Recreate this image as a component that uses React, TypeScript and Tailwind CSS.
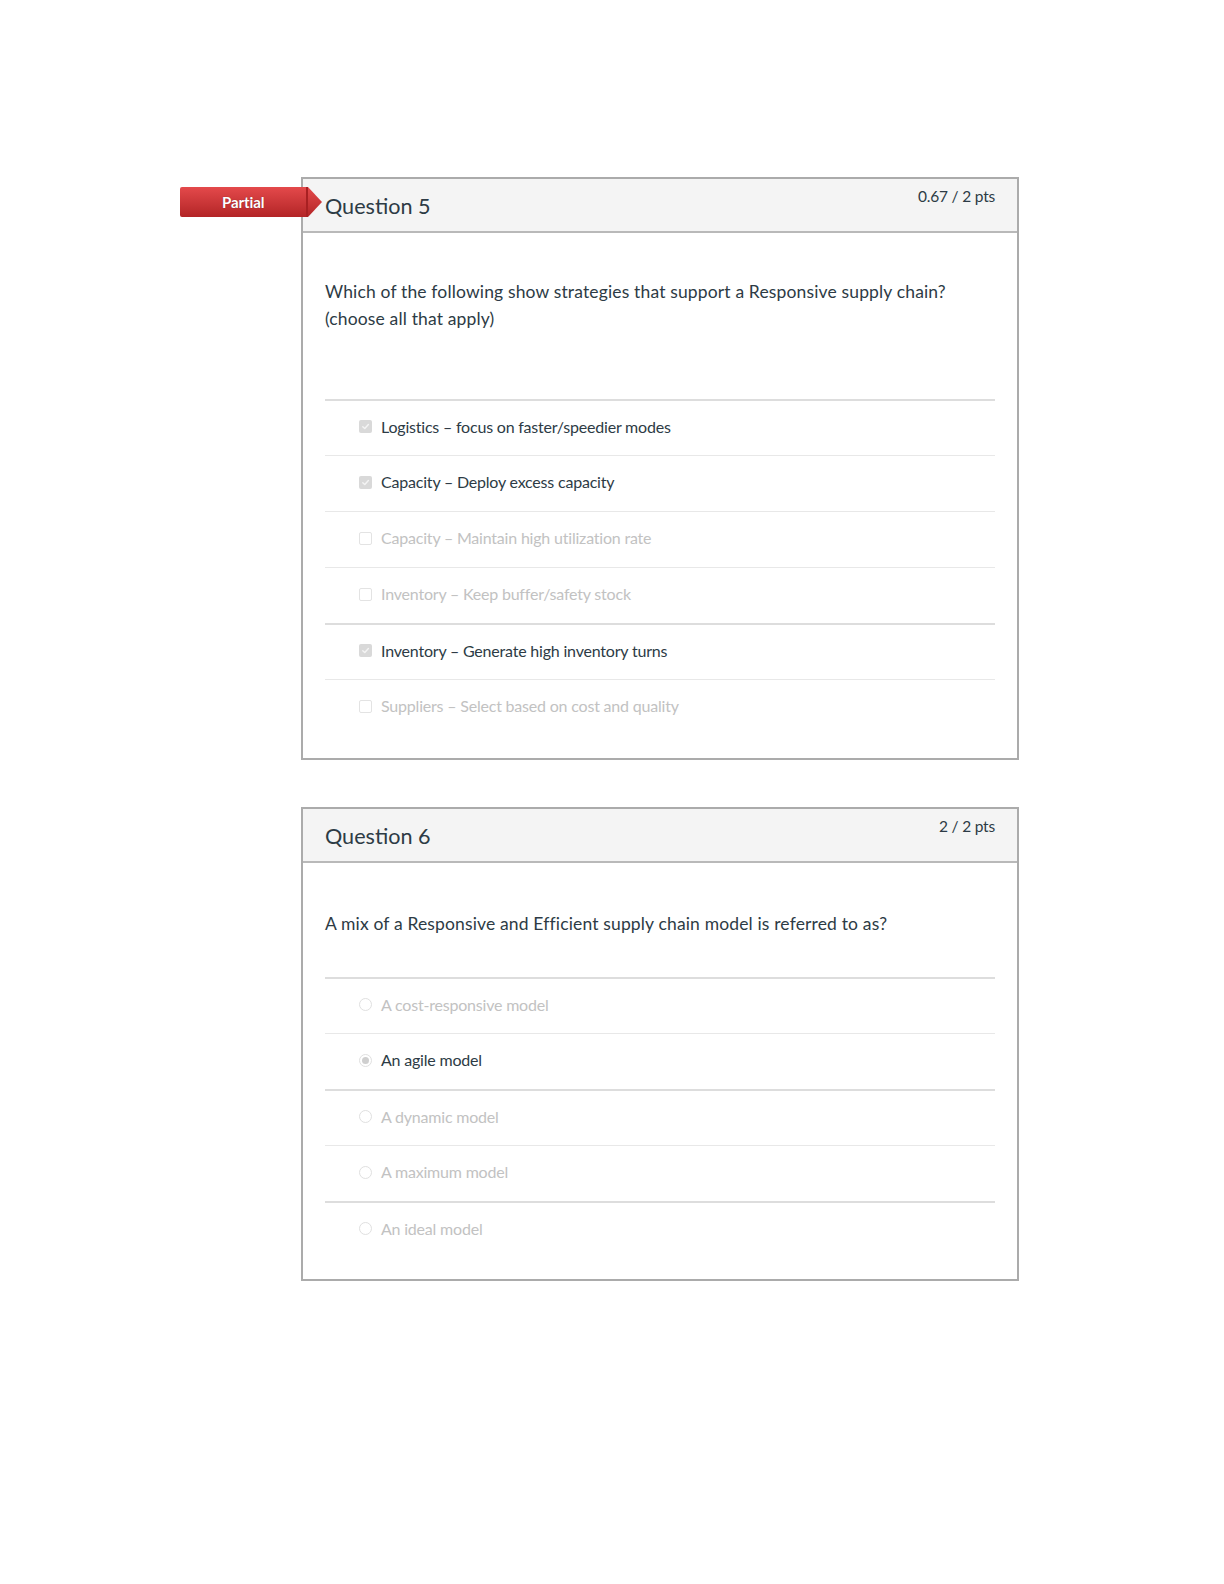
import React from 'react';

type Answer = { text: string; selected: boolean; thick?: boolean };

const q5Answers: Answer[] = [
  { text: "Logistics – focus on faster/speedier modes", selected: true, thick: true },
  { text: "Capacity – Deploy excess capacity", selected: true },
  { text: "Capacity – Maintain high utilization rate", selected: false },
  { text: "Inventory – Keep buffer/safety stock", selected: false },
  { text: "Inventory – Generate high inventory turns", selected: true, thick: true },
  { text: "Suppliers – Select based on cost and quality", selected: false }
];

const q6Answers: Answer[] = [
  { text: "A cost-responsive model", selected: false, thick: true },
  { text: "An agile model", selected: true },
  { text: "A dynamic model", selected: false, thick: true },
  { text: "A maximum model", selected: false },
  { text: "An ideal model", selected: false, thick: true }
];

function CheckBox({ checked }: { checked: boolean }) {
  if (checked) {
    return (
      <span className="w-[13px] h-[13px] rounded-[2px] bg-[#d9d9d9] flex items-center justify-center">
        <svg width="9" height="9" viewBox="0 0 10 10" fill="none">
          <path d="M2 5.2 L4.2 7.2 L8.2 2.8" stroke="#f4f4f4" strokeWidth="1.6" strokeLinecap="round" strokeLinejoin="round" />
        </svg>
      </span>
    );
  }
  return <span className="w-[13px] h-[13px] rounded-[2px] border border-[#e3e3e3] bg-white" />;
}

function Radio({ checked }: { checked: boolean }) {
  return (
    <span className="w-[13px] h-[13px] rounded-full border border-[#e0e0e0] bg-white flex items-center justify-center">
      {checked && <span className="w-[7px] h-[7px] rounded-full bg-[#cfcfcf]" />}
    </span>
  );
}

function AnswerRow({ answer, kind }: { answer: Answer; kind: 'check' | 'radio' }) {
  return (
    <div
      className={
        answer.thick
          ? "h-[56px] border-t-2 border-[#dddddd] flex items-center pl-[34px] pb-[3px]"
          : "h-[56px] border-t border-[#e8e8e8] flex items-center pl-[34px] pb-[3px]"
      }
    >
      {kind === 'check' ? <CheckBox checked={answer.selected} /> : <Radio checked={answer.selected} />}
      <span
        className={
          answer.selected
            ? "ml-[9px] text-[16px] tracking-[-0.2px] text-[#2d3b45]"
            : "ml-[9px] text-[16px] tracking-[-0.2px] text-[#c2c2c2]"
        }
      >
        {answer.text}
      </span>
    </div>
  );
}

function QuestionCard({
  title,
  points,
  partial,
  children
}: {
  title: string;
  points: string;
  partial?: boolean;
  children: React.ReactNode;
}) {
  return (
    <div className="relative w-[718px] border-2 border-[#ababab] bg-white">
      {partial && (
        <div className="absolute left-[-123px] top-[8px] w-[142px] h-[30px] bg-gradient-to-b from-[#e4494b] to-[#b32426] [clip-path:polygon(0_0,128px_0,142px_50%,128px_100%,0_100%)] rounded-l-[2px] flex items-center pl-[42px]">
          <span className="text-white font-bold text-[15px] tracking-[-0.1px] [text-shadow:0_0_1px_rgba(0,0,0,0.4)]">
            Partial
          </span>
          <span className="absolute left-[126px] top-0 h-full w-[2px] bg-[#a82022]" />
        </div>
      )}
      <div className="h-[54px] bg-[#f4f4f4] border-b-2 border-[#b9b9b9] flex justify-between items-start px-[22px]">
        <h2 className="pt-[15px] text-[21.6px] leading-[25px] text-[#2d3b45]">{title}</h2>
        <span className="pt-[8px] text-[15.5px] leading-[18px] tracking-[-0.2px] text-[#2d3b45]">{points}</span>
      </div>
      {children}
    </div>
  );
}

export default function App() {
  return (
    <div className="min-h-[1584px] bg-white font-['Lato','Noto_Sans',sans-serif] pt-[177px] pl-[301px]">
      <QuestionCard title="Question 5" points="0.67 / 2 pts" partial>
        <div className="px-[22px] pt-[45px] pb-[23px]">
          <p className="text-[17.5px] leading-[27px] tracking-[0.15px] text-[#2d3b45] mb-[67px]">
            Which of the following show strategies that support a Responsive supply chain?
            <br />
            (choose all that apply)
          </p>
          <div>
            {q5Answers.map((a, i) => (
              <AnswerRow key={i} answer={a} kind="check" />
            ))}
          </div>
        </div>
      </QuestionCard>

      <div className="mt-[47px]">
        <QuestionCard title="Question 6" points="2 / 2 pts">
          <div className="px-[22px] pt-[47px] pb-[22px]">
            <p className="text-[17.5px] leading-[27px] tracking-[0.15px] text-[#2d3b45] mb-[40px]">
              A mix of a Responsive and Efficient supply chain model is referred to as?
            </p>
            <div>
              {q6Answers.map((a, i) => (
                <AnswerRow key={i} answer={a} kind="radio" />
              ))}
            </div>
          </div>
        </QuestionCard>
      </div>
    </div>
  );
}
